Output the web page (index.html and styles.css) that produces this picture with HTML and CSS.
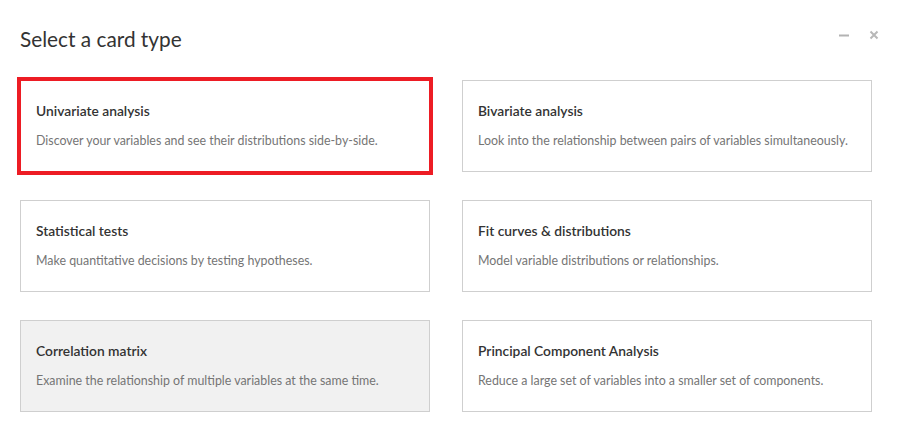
FILE: index.html
```html
<!DOCTYPE html>
<html>
<head>
<meta charset="utf-8">
<link rel="stylesheet" href="styles.css">
</head>
<body>
<div class="dialog">
  <div class="header">
    <h1 class="title">Select a card type</h1>
    <div class="controls">
      <svg class="ctl" width="10" height="10" viewBox="0 0 10 10"><path d="M0 5.5H10" stroke="#b3b3b3" stroke-width="2"/></svg>
      <svg class="ctl" width="10" height="10" viewBox="0 0 10 10"><path d="M1.5 1.5L8.5 8.5M8.5 1.5L1.5 8.5" stroke="#b8b8b8" stroke-width="2"/></svg>
    </div>
  </div>
  <div class="grid">
    <div class="card selected">
      <div class="card-title">Univariate analysis</div>
      <div class="card-desc">Discover your variables and see their distributions side-by-side.</div>
    </div>
    <div class="card">
      <div class="card-title">Bivariate analysis</div>
      <div class="card-desc">Look into the relationship between pairs of variables simultaneously.</div>
    </div>
    <div class="card">
      <div class="card-title">Statistical tests</div>
      <div class="card-desc">Make quantitative decisions by testing hypotheses.</div>
    </div>
    <div class="card">
      <div class="card-title">Fit curves &amp; distributions</div>
      <div class="card-desc">Model variable distributions or relationships.</div>
    </div>
    <div class="card hover">
      <div class="card-title">Correlation matrix</div>
      <div class="card-desc">Examine the relationship of multiple variables at the same time.</div>
    </div>
    <div class="card">
      <div class="card-title">Principal Component Analysis</div>
      <div class="card-desc">Reduce a large set of variables into a smaller set of components.</div>
    </div>
  </div>
</div>
</body>
</html>
```
FILE: styles.css
```css
html, body {
  margin: 0;
  padding: 0;
  background: #ffffff;
}
body {
  font-family: Lato, "Liberation Sans", sans-serif;
  color: #333333;
}
.dialog {
  padding: 0 20px;
}
.header {
  display: flex;
  justify-content: space-between;
  align-items: flex-start;
  height: 80px;
}
.title {
  margin: 25px 0 0 0;
  font-size: 20.8px;
  font-weight: 400;
  line-height: 28px;
  color: #333333;
}
.controls {
  display: flex;
  gap: 20px;
  margin-top: 30px;
  margin-right: 0;
}
.grid {
  display: grid;
  grid-template-columns: 410px 410px;
  grid-auto-rows: 92px;
  column-gap: 32px;
  row-gap: 28px;
}
.card {
  box-sizing: border-box;
  border: 1px solid #cfcfcf;
  background: #ffffff;
  padding: 21px 15px 0 15px;
  display: flex;
  flex-direction: column;
  gap: 12px;
}
.card.selected {
  border-color: #ed1c24;
  outline: 3px solid #ed1c24;
}
.card.hover {
  background: #f1f1f1;
}
.card-title {
  font-size: 13.8px;
  line-height: 18px;
  font-weight: 600;
  color: #333333;
}
.card-desc {
  font-size: 12.4px;
  line-height: 18px;
  color: #757575;
  white-space: nowrap;
}
```
